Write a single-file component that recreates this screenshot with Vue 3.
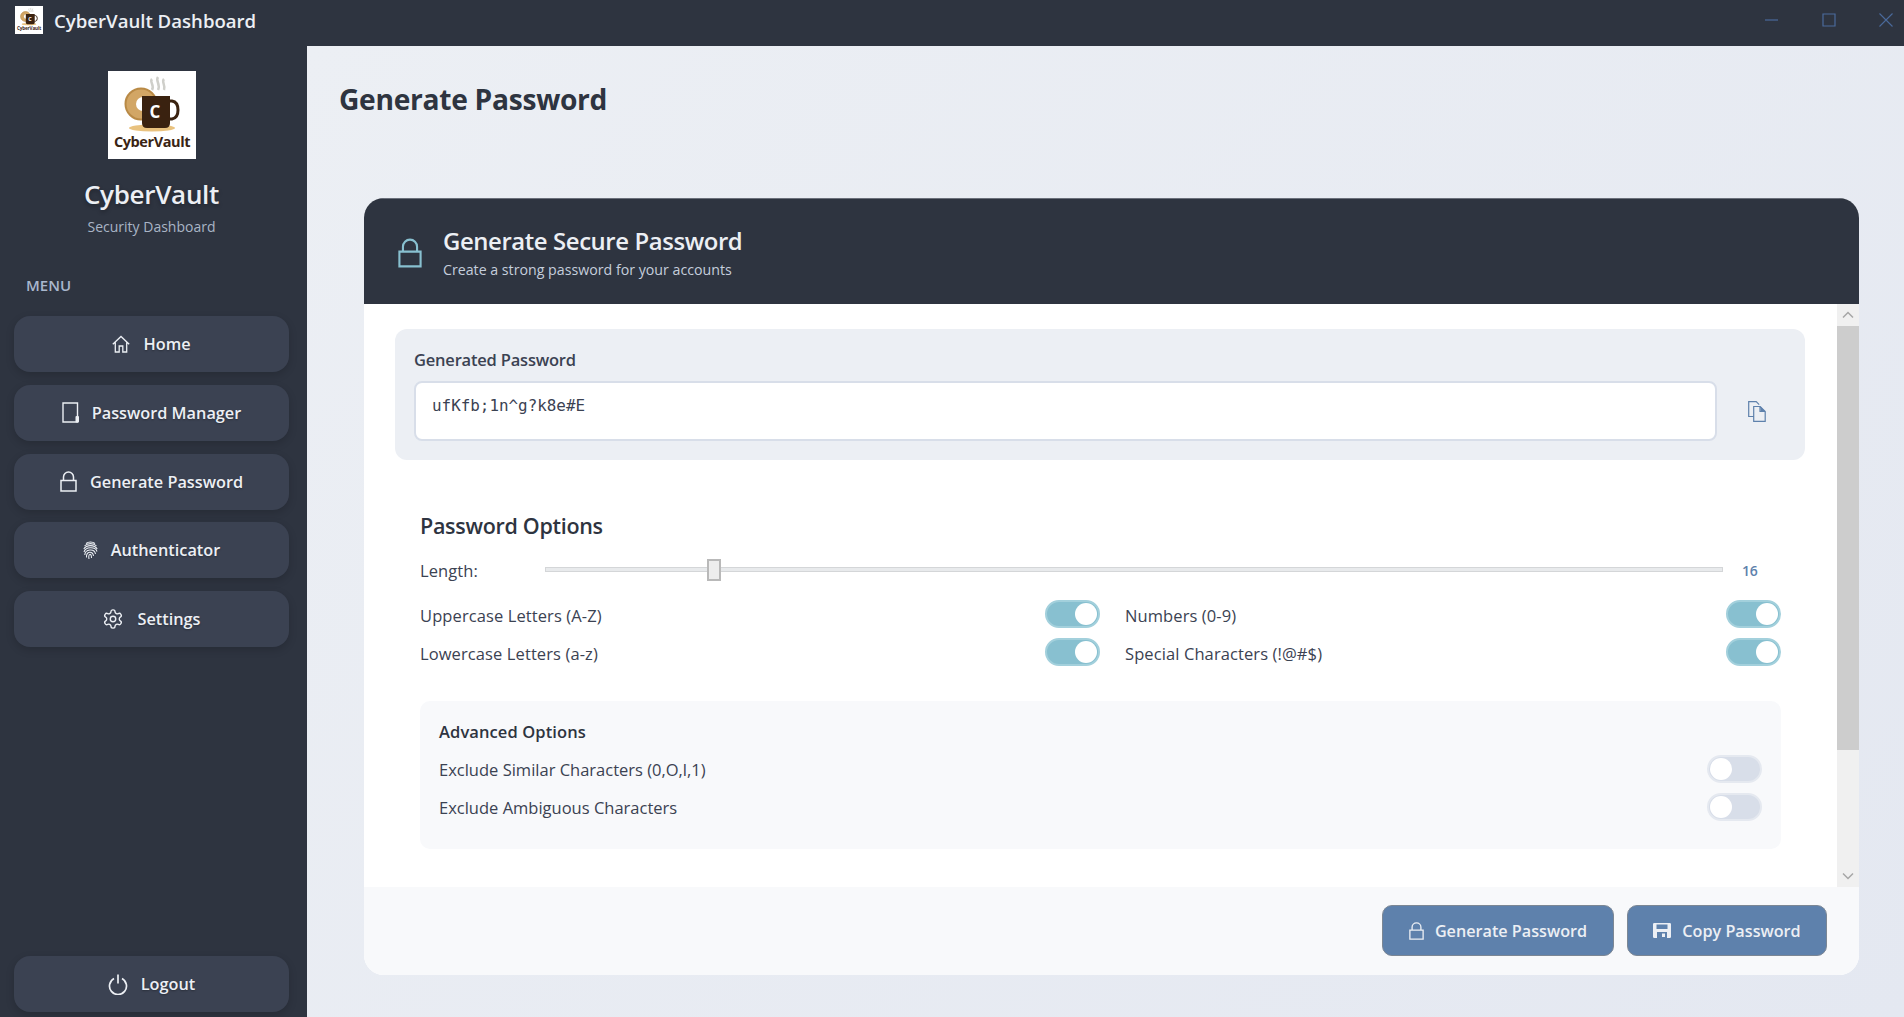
<template>
  <div class="ventana">
    <!-- iconos compartidos -->
    <svg class="defs" width="0" height="0">
      <defs>
        <symbol id="logo" viewBox="0 0 88 88">
          <rect width="88" height="88" fill="#fff" />
          <ellipse cx="44" cy="57" rx="23" ry="3.500" fill="#e9c27f" />
          <circle cx="33" cy="33" r="15.500" fill="#d2a665" stroke="#b98a46" stroke-width="2" />
          <circle cx="35" cy="33" r="7" fill="#fff" />
          <path d="M44 8c-3 3 3 6 0 11M50 6c-3 4 3 7 0 13M56 8c-3 3 2 6 0 11" fill="none" stroke="#cfcfca" stroke-width="2.500" />
          <path d="M34 25h28v27q0 5-5 5H39q-5 0-5-5z" fill="#3a2210" />
          <path d="M61 30h3q6 1 6 9t-6 9h-3" fill="none" stroke="#3a2210" stroke-width="3" />
          <text x="47" y="47" font-size="17" font-weight="700" text-anchor="middle" fill="#fff" font-family="Open Sans, sans-serif">C</text>
          <text x="44" y="76" font-size="14.500" font-weight="700" text-anchor="middle" fill="#3a2414" font-family="Open Sans, sans-serif" letter-spacing="-0.400">CyberVault</text>
        </symbol>
        <symbol id="ic-home" viewBox="0 0 18 18">
          <path d="M.8 9.300 9 1.500l8.200 7.800M3.300 7.500v9.500h3.900v-6h3.600v6h3.900V7.500" fill="none" stroke="currentColor" stroke-width="1.300" />
        </symbol>
        <symbol id="ic-tablet" viewBox="0 0 17 21">
          <path d="M1 1h14.500v19H1z" fill="none" stroke="currentColor" stroke-width="1.400" />
          <rect x="13.500" y="14" width="3.500" height="6.500" rx="1" fill="currentColor" />
        </symbol>
        <symbol id="ic-lock" viewBox="0 0 17 21">
          <path d="M1 9.500h15v10.500H1zM3.500 9.500V6a5 5 0 0 1 10 0v3.500" fill="none" stroke="currentColor" stroke-width="1.500" />
        </symbol>
        <symbol id="ic-finger" viewBox="0 0 15 19">
          <path d="M3 2.500C5.500.5 9.500.5 12 2.500M1.500 5C4.500 1.800 10.500 1.800 13.500 5M.8 8C3.500 3.500 11.500 3.500 14.200 8M1 11C2.500 5.500 12.500 5.500 14 10.500M1.800 14C2 8 11.500 7 12.500 13M3.500 16.500C3 10 10 9.500 10.500 15M6 18C5 12.500 8.500 11.500 8.500 17" fill="none" stroke="currentColor" stroke-width="1.050" />
        </symbol>
        <symbol id="ic-gear" viewBox="0 0 24 24">
          <path d="M12.220 2h-.44a2 2 0 0 0-2 2v.18a2 2 0 0 1-1 1.730l-.43.250a2 2 0 0 1-2 0l-.15-.08a2 2 0 0 0-2.730.730l-.22.380a2 2 0 0 0 .730 2.730l.150.100a2 2 0 0 1 1 1.720v.510a2 2 0 0 1-1 1.740l-.15.090a2 2 0 0 0-.730 2.730l.220.380a2 2 0 0 0 2.730.730l.150-.08a2 2 0 0 1 2 0l.430.250a2 2 0 0 1 1 1.730V20a2 2 0 0 0 2 2h.440a2 2 0 0 0 2-2v-.18a2 2 0 0 1 1-1.730l.430-.25a2 2 0 0 1 2 0l.150.080a2 2 0 0 0 2.730-.730l.220-.39a2 2 0 0 0-.730-2.730l-.15-.08a2 2 0 0 1-1-1.740v-.5a2 2 0 0 1 1-1.740l.150-.09a2 2 0 0 0 .730-2.730l-.22-.38a2 2 0 0 0-2.730-.73l-.15.080a2 2 0 0 1-2 0l-.43-.25a2 2 0 0 1-1-1.730V4a2 2 0 0 0-2-2z" fill="none" stroke="currentColor" stroke-width="1.500" />
          <circle cx="12" cy="12" r="3" fill="none" stroke="currentColor" stroke-width="1.500" />
        </symbol>
        <symbol id="ic-power" viewBox="0 0 20 21">
          <path d="M6 4.500a8.500 8.500 0 1 0 8 0M10 .5v9" fill="none" stroke="currentColor" stroke-width="1.700" />
        </symbol>
        <symbol id="ic-save" viewBox="0 0 18 15">
          <path d="M0 1.200A1.200 1.200 0 0 1 1.200 0h15.600A1.200 1.200 0 0 1 18 1.200v12.600a1.200 1.200 0 0 1-1.200 1.200H1.200A1.200 1.200 0 0 1 0 13.800zM3.500 1.500v4.500h11V1.500zM4 9v6h10V9zM9 10.500h3v3.500H9z" fill="currentColor" fill-rule="evenodd" />
        </symbol>
        <symbol id="ic-copy" viewBox="0 0 18 21">
          <path d="M5.500 15.500H.7V.7h7.500l3 3M5.700 5.500h6.500l5 5v9.800H5.700zM12 5.500v5h5.200" fill="none" stroke="currentColor" stroke-width="1.200" />
          <path d="M12.500 5.500l4.700 5h-4.700z" fill="currentColor" />
        </symbol>
      </defs>
    </svg>

    <!-- BARRA DE TITULO -->
    <header class="titlebar">
      <svg class="titlebar-logo"><use href="#logo" /></svg>
      <span class="titlebar-text">CyberVault Dashboard</span>
      <div class="win-controls">
        <svg width="14" height="14" viewBox="0 0 14 14"><path d="M0 7h13" stroke="currentColor" stroke-width="1.200" /></svg>
        <svg width="14" height="14" viewBox="0 0 14 14"><path d="M1 1h12v12H1z" fill="none" stroke="currentColor" stroke-width="1.200" /></svg>
        <svg width="14" height="14" viewBox="0 0 14 14"><path d="M.5.5l13 13M13.500.5l-13 13" stroke="currentColor" stroke-width="1.100" /></svg>
      </div>
    </header>

    <div class="cuerpo">
      <!-- MENU LATERAL -->
      <aside class="sidebar">
        <svg class="side-logo"><use href="#logo" /></svg>
        <div class="side-name">CyberVault</div>
        <div class="side-sub">Security Dashboard</div>
        <div class="side-menu">MENU</div>
        <nav class="side-nav">
          <button v-for="item in menu" :key="item.label" class="nav-btn">
            <svg :width="item.w" :height="item.h"><use :href="'#' + item.icon" /></svg>
            {{ item.label }}
          </button>
        </nav>
        <button class="nav-btn logout">
          <svg width="20" height="21"><use href="#ic-power" /></svg>
          Logout
        </button>
      </aside>

      <!-- CONTENIDO -->
      <main class="contenido">
        <h1 class="titulo">Generate Password</h1>

        <section class="card">
          <div class="card-head">
            <svg class="head-lock" width="24" height="30"><use href="#ic-lock" /></svg>
            <div>
              <div class="head-title">Generate Secure Password</div>
              <div class="head-sub">Create a strong password for your accounts</div>
            </div>
          </div>

          <div class="card-main">
            <div class="scroll-area">
              <div class="gen-panel">
                <div class="gen-left">
                  <div class="gen-label">Generated Password</div>
                  <div class="gen-input">{{ password }}</div>
                </div>
                <button class="copy-btn">
                  <svg width="18" height="21"><use href="#ic-copy" /></svg>
                </button>
              </div>

              <div class="opciones">
                <h2 class="op-title">Password Options</h2>
                <div class="length-row">
                  <span class="length-label">Length:</span>
                  <div class="slider">
                    <div class="slider-handle" :style="{ left: sliderPos + '%' }"></div>
                  </div>
                  <span class="length-value">{{ length }}</span>
                </div>

                <div class="toggles">
                  <div v-for="op in opciones" :key="op.label" class="toggle-row">
                    <span class="toggle-text">{{ op.label }}</span>
                    <button class="toggle" :class="{ on: op.on }" @click="op.on = !op.on"></button>
                  </div>
                </div>

                <div class="avanzado">
                  <div class="av-title">Advanced Options</div>
                  <div v-for="op in avanzadas" :key="op.label" class="toggle-row av-row">
                    <span>{{ op.label }}</span>
                    <button class="toggle" :class="{ on: op.on }" @click="op.on = !op.on"></button>
                  </div>
                </div>
              </div>
            </div>

            <div class="scrollbar">
              <div class="sb-arrow">
                <svg width="12" height="8" viewBox="0 0 12 8"><path d="M1 6.500l5-5 5 5" fill="none" stroke="#a6a6a6" stroke-width="1.500" /></svg>
              </div>
              <div class="sb-thumb"></div>
              <div class="sb-track"></div>
              <div class="sb-arrow">
                <svg width="12" height="8" viewBox="0 0 12 8"><path d="M1 1.500l5 5 5-5" fill="none" stroke="#a6a6a6" stroke-width="1.500" /></svg>
              </div>
            </div>
          </div>

          <div class="card-foot">
            <button class="foot-btn gen">
              <svg width="15" height="18" viewBox="0 0 17 21" preserveAspectRatio="none"><use href="#ic-lock" /></svg>
              Generate Password
            </button>
            <button class="foot-btn cop">
              <svg width="18" height="15"><use href="#ic-save" /></svg>
              Copy Password
            </button>
          </div>
        </section>
      </main>
    </div>
  </div>
</template>

<script setup>
import { ref, computed } from "vue"

const password = ref("ufKfb;1n^g?k8e#E")
const length = ref(16)

// el slider va de 8 a 64
const sliderPos = computed(() => ((length.value - 8) / 56) * 100)

const menu = [
  { label: "Home", icon: "ic-home", w: 18, h: 18 },
  { label: "Password Manager", icon: "ic-tablet", w: 17, h: 21 },
  { label: "Generate Password", icon: "ic-lock", w: 17, h: 21 },
  { label: "Authenticator", icon: "ic-finger", w: 15, h: 19 },
  { label: "Settings", icon: "ic-gear", w: 22, h: 22 }
]

const opciones = ref([
  { label: "Uppercase Letters (A-Z)", on: true },
  { label: "Numbers (0-9)", on: true },
  { label: "Lowercase Letters (a-z)", on: true },
  { label: "Special Characters (!@#$)", on: true }
])

const avanzadas = ref([
  { label: "Exclude Similar Characters (0,O,l,1)", on: false },
  { label: "Exclude Ambiguous Characters", on: false }
])
</script>

<style>
html, body {
  margin: 0;
  overflow: hidden;
}
</style>

<style scoped>
.ventana {
  width: 1904px;
  height: 1017px;
  display: flex;
  flex-direction: column;
  font-family: "Open Sans", "Liberation Sans", sans-serif;
  color: #2e3440;
}

.defs {
  position: absolute;
}

button {
  font-family: inherit;
  cursor: pointer;
}

.titlebar {
  height: 46px;
  flex: none;
  box-sizing: border-box;
  background: #2e3440;
  display: flex;
  align-items: center;
  padding: 0 0 6px 14px;
  color: #eceff4;
}

.titlebar-logo {
  width: 30px;
  height: 28px;
}

.titlebar-text {
  margin-left: 10px;
  font-size: 18.600px;
  font-weight: 600;
}

.win-controls {
  margin-left: auto;
  display: flex;
  gap: 43px;
  padding-right: 11px;
  color: #4a6a9c;
}

.cuerpo {
  flex: 1;
  display: flex;
  min-height: 0;
}

.sidebar {
  width: 307px;
  flex: none;
  background: #2e3440;
  display: flex;
  flex-direction: column;
  align-items: center;
  padding: 25px 18px 5px 14px;
  box-sizing: border-box;
}

.side-logo {
  width: 88px;
  height: 88px;
  flex: none;
}

.side-name {
  margin-top: 17px;
  font-size: 26px;
  line-height: 36px;
  font-weight: 600;
  color: #eceff4;
  letter-spacing: -0.300px;
  text-shadow: 0 2px 4px rgba(0, 0, 0, 0.3);
}

.side-sub {
  margin-top: 4px;
  font-size: 14px;
  line-height: 22px;
  color: #a9b4c6;
}

.side-menu {
  align-self: flex-start;
  margin: 36px 0 0 12px;
  font-size: 15px;
  line-height: 22px;
  font-weight: 600;
  color: #a9b7cd;
}

.side-nav {
  margin-top: 20px;
  width: 100%;
  display: flex;
  flex-direction: column;
  gap: 12.750px;
}

.nav-btn {
  width: 275px;
  height: 56px;
  flex: none;
  border: none;
  border-radius: 16px;
  background: #3b4252;
  color: #eceff4;
  font-size: 16.300px;
  font-weight: 600;
  display: flex;
  align-items: center;
  justify-content: center;
  gap: 13px;
  box-shadow: 0 3px 8px rgba(0, 0, 0, 0.16);
  text-shadow: 0 1px 2px rgba(0, 0, 0, 0.3);
}

.logout {
  margin-top: auto;
}

.contenido {
  flex: 1;
  min-width: 0;
  display: flex;
  flex-direction: column;
  padding: 0 45px 42px 57px;
  background: linear-gradient(135deg, #eceff4, #e4e8f1);
}

.titulo {
  margin: 34px 0 0 -25px;
  height: 38px;
  font-size: 28.200px;
  line-height: 38px;
  font-weight: 700;
  letter-spacing: -0.300px;
  color: #2e3440;
}

.card {
  margin-top: 80px;
  flex: 1;
  display: flex;
  flex-direction: column;
  border-radius: 20px;
  overflow: hidden;
  background: #fff;
  min-height: 0;
}

.card-head {
  height: 106px;
  flex: none;
  background: #2e3440;
  border-top: 1px solid #6b707b;
  box-sizing: border-box;
  display: flex;
  align-items: center;
  gap: 21px;
  padding: 2px 0 0 34px;
}

.head-lock {
  color: #88c0d0;
}

.head-title {
  font-size: 23.900px;
  line-height: 32px;
  font-weight: 600;
  letter-spacing: -0.400px;
  color: #eceff4;
}

.head-sub {
  margin-top: 2px;
  font-size: 14.200px;
  line-height: 22px;
  color: #c5cedc;
}

.card-main {
  flex: 1;
  display: flex;
  min-height: 0;
}

.scroll-area {
  flex: 1;
  min-width: 0;
  padding: 25px 32px 0 31px;
}

.gen-panel {
  height: 131px;
  box-sizing: border-box;
  background: #eceff4;
  border-radius: 12px;
  display: flex;
  align-items: flex-end;
  gap: 16px;
  padding: 18px 24px 19px 19px;
}

.gen-left {
  flex: 1;
  min-width: 0;
}

.gen-label {
  font-size: 16.500px;
  line-height: 26px;
  font-weight: 600;
  letter-spacing: -0.200px;
  color: #3b4252;
  margin-bottom: 8px;
}

.gen-input {
  height: 60px;
  box-sizing: border-box;
  background: #fff;
  border: 2px solid #d8dee9;
  border-radius: 8px;
  padding: 13px 16px;
  font-family: "DejaVu Sans Mono", "Liberation Mono", monospace;
  font-size: 15.900px;
  line-height: 20px;
  color: #3b4252;
}

.copy-btn {
  width: 48px;
  height: 60px;
  border: none;
  background: none;
  padding: 0;
  color: #5e81ac;
  display: flex;
  align-items: center;
  justify-content: center;
}

.opciones {
  margin: 50px 24px 0 25px;
}

.op-title {
  margin: 0;
  font-size: 21.500px;
  line-height: 32px;
  font-weight: 600;
  letter-spacing: -0.300px;
  color: #2e3440;
}

.length-row {
  margin-top: 14px;
  height: 28px;
  display: flex;
  align-items: center;
  font-size: 16.500px;
  letter-spacing: 0.100px;
  color: #3b4252;
}

.length-label {
  width: 125px;
  flex: none;
}

.slider {
  flex: 1;
  height: 5px;
  background: #e8eaec;
  border: 1px solid #d4d6d8;
  box-sizing: border-box;
  position: relative;
  margin-top: -2px;
}

.slider-handle {
  position: absolute;
  top: -9px;
  width: 14px;
  height: 22px;
  box-sizing: border-box;
  transform: translateX(-50%);
  background: #eeeeee;
  border: 2px solid #b9b9b9;
}

.length-value {
  width: 39px;
  flex: none;
  margin-left: 19px;
  font-size: 14px;
  font-weight: 600;
  letter-spacing: -0.300px;
  color: #5e81ac;
}

.toggles {
  margin-top: 16px;
  display: grid;
  grid-template-columns: 680px 1fr;
  column-gap: 25px;
  row-gap: 10px;
}

.toggle-row {
  height: 28px;
  display: flex;
  align-items: center;
  justify-content: space-between;
  font-size: 16.500px;
  letter-spacing: 0.100px;
  color: #3b4252;
}

.toggle-text {
  padding-top: 2px;
}

.av-row {
  letter-spacing: 0;
}

.toggle {
  width: 55px;
  height: 28px;
  flex: none;
  padding: 0;
  border: 2px solid #e5e9f0;
  border-radius: 14px;
  background: #d8dee9;
  position: relative;
  box-sizing: border-box;
}

.toggle::after {
  content: "";
  position: absolute;
  top: 1px;
  left: 1px;
  width: 22px;
  height: 22px;
  border-radius: 50%;
  background: #fff;
}

.toggle.on {
  background: #88c0d0;
  border-color: #a3d0dc;
}

.toggle.on::after {
  left: auto;
  right: 1px;
}

.avanzado {
  margin-top: 35px;
  height: 148px;
  box-sizing: border-box;
  background: #f8f9fb;
  border-radius: 10px;
  padding: 19px 19px 0;
  display: flex;
  flex-direction: column;
  gap: 10px;
}

.av-title {
  font-size: 16.500px;
  line-height: 24px;
  font-weight: 600;
  letter-spacing: 0.100px;
  color: #2e3440;
  margin-bottom: 1px;
}

.scrollbar {
  width: 22px;
  flex: none;
  display: flex;
  flex-direction: column;
  background: #f0f0f0;
}

.sb-arrow {
  height: 22px;
  flex: none;
  display: flex;
  align-items: center;
  justify-content: center;
}

.sb-thumb {
  height: 424px;
  flex: none;
  background: #cdcdcd;
}

.sb-track {
  flex: 1;
}

.card-foot {
  height: 88px;
  flex: none;
  box-sizing: border-box;
  background: #f8f9fb;
  display: flex;
  justify-content: flex-end;
  gap: 13px;
  padding: 18px 32px 0 0;
}

.foot-btn {
  height: 51px;
  box-sizing: border-box;
  border: 1.500px solid #7c8794;
  border-radius: 10px;
  background: #5e81ac;
  color: #eceff4;
  font-size: 16.200px;
  font-weight: 600;
  display: flex;
  align-items: center;
  justify-content: center;
  gap: 11px;
}

.foot-btn.gen {
  width: 232px;
}

.foot-btn.cop {
  width: 200px;
}
</style>
